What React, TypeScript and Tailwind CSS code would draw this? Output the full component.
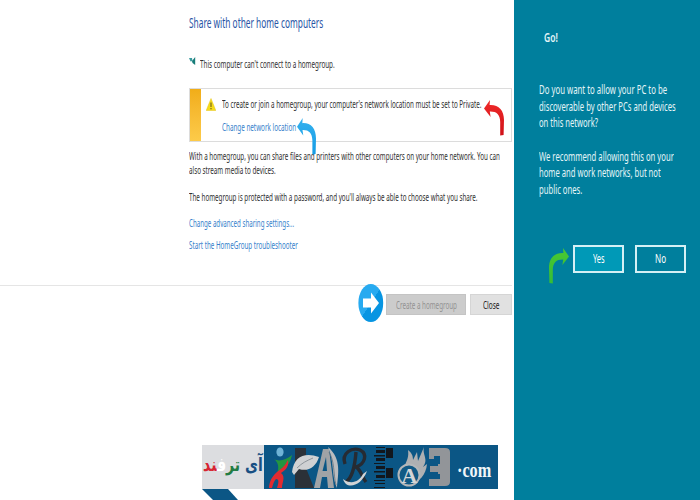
import { useLayoutEffect, useRef, useState } from "react";
import type { ReactNode } from "react";

type FitProps = { children: ReactNode; width: number; className?: string };

/** A single line of text condensed horizontally to the given width. */
function Fit({ children, width, className = "" }: FitProps) {
  const ref = useRef<HTMLSpanElement>(null);
  const [scale, setScale] = useState(1);
  useLayoutEffect(() => {
    if (ref.current) setScale(width / ref.current.offsetWidth);
  }, [width]);
  return (
    <div className={className} style={{ width }}>
      <span
        ref={ref}
        className="inline-block origin-left whitespace-nowrap align-top"
        style={{ transform: `scaleX(${scale})` }}
      >
        {children}
      </span>
    </div>
  );
}

function CurvedArrow({ id, from, to }: { id: string; from: string; to: string }) {
  return (
    <svg viewBox="0 0 20 36" className="h-full w-full" preserveAspectRatio="none">
      <defs>
        <linearGradient id={id} x1="0" y1="0" x2="0" y2="1">
          <stop offset="0" stopColor={from} />
          <stop offset="1" stopColor={to} />
        </linearGradient>
      </defs>
      <path
        d="M0 8.5 L6 0 L5.6 5 C14.5 4.5 20 10 20 20 L19.6 35 L16.2 35.5 L16.2 22 C16 14.5 12.5 11.4 5.8 11.6 L6.6 17 Z"
        fill={`url(#${id})`}
      />
    </svg>
  );
}

function BannerArt() {
  return (
    <svg viewBox="264 440 198 60" className="h-[60px] w-[198px]">
      <g>
        <ellipse cx="280" cy="452" rx="3.6" ry="4.6" fill="#6fb3d6" />
        <path d="M274 459 C279 462 286 460 292 455 C290 464 285 470 277 474 C279 468 279 463 274 459Z" fill="#24963f" />
        <path d="M288 460 C289 466 286 470 281 473 C286 477 282 482 282 488 H277 C279 482 279 479 276 479 C274 481 273 484 272 488 H269 C270 474 280 471 285 465Z" fill="#e12b30" />
      </g>
      <path d="M295 448 H306 V468 L314 488 H295Z" fill="#2b3138" />
      <path d="M292 472 C294 456 305 452 319 457 C316 467 308 472 299 469 L294 475Z" fill="#cfd1d3" />
      <path d="M297 468 C302 463 306 461 313 458" stroke="#8f969c" fill="none" />
      <path d="M323 449 H329 L334 488 H328 L327 477 H322 L320 488 H314Z M326 457 L322.5 471 H327Z" fill="#a0a3a6" fillRule="evenodd" />
      <path d="M328 447 C342 459 338 474 337 488 C331 475 335 464 328 447Z" fill="#babcbf" />
      <path d="M329 452 C335 462 333 473 336 485" stroke="#65717b" strokeWidth=".8" fill="none" />
      <path d="M345 464 C341 453 352 447 360 450 C368 454 365 464 356 467 C361 470 362 477 366 482 M356 452 C355 465 352 478 346 482" stroke="#262b33" strokeWidth="3.4" fill="none" />
      <path d="M343 479 C346 490 361 487 367 471 L363 474 C359 482 351 485 343 479Z" fill="#d1d4d6" />
      <g fill="#12171d">
        <path d="M376 447h9v1h-9z M376 450h9v3h-9z M374 455h11v1.5h-11z M376 458h9v3h-9z M374 463h11v1h-11z M376 466h9v3h-9z M374 471h11v1.5h-11z M376 475h9v3h-9z M374 480h11v1h-11z M375 483h10v1h-10z M374 487h11v1h-11z" />
        <path d="M386 448h7v10h-7z M386 468h7v10h-7z" />
      </g>
      <path d="M405 465 C407 460 409 457 408 450 C412 453 413 456 413 460 L417 452 L418 461 L424 447 C422 455 429 459 423 467 L427 464 C426 475 419 482 411 484Z" fill="#aeb0b2" />
      <circle cx="409" cy="475" r="10.5" fill="#105985" stroke="#b4b7b9" strokeWidth="2" />
      <text x="401.5" y="483" fontFamily="Liberation Serif, serif" fontSize="22" fontWeight="bold" fill="#d4d6d8">A</text>
      <path d="M429 448 H445 Q450 448 450 452 V482 Q450 486 445 486 H429 V479 H440 V474 H438 V472 H430 V466 H438 V464 H440 V456 H434 V459 H429Z" fill="#929599" />
    </svg>
  );
}

const body = "h-[14px] text-[11px] leading-[14px]";
const side = "h-[16.7px] text-[12.5px] leading-[16.7px]";

export default function App() {
  return (
    <div className="relative flex h-[500px] w-[700px] overflow-hidden bg-white font-['Noto_Sans',sans-serif] text-[#303030]">
      <main className="flex w-[514px] flex-col">
        <section className="flex h-[285px] flex-col pl-[189px]">
          <Fit width={134} className="mt-[13px] h-5 text-[14px] leading-5 text-[#2854a5]">Share with other home computers</Fit>
          <div className="mt-[24px] flex">
            <svg viewBox="0 0 7 9" className="h-[9px] w-[7px]">
              <path d="M0 1 L3 1 L3.5 4 L1.5 4.5Z" fill="#3b9ca0" />
              <path d="M3 4 L6.2 0 V8 L3.5 6Z" fill="#167c78" />
            </svg>
            <Fit width={134.5} className={`ml-[3.5px] ${body}`}>This computer can't connect to a homegroup.</Fit>
          </div>
          <div className="mt-[17px] flex h-[54px] w-[323px] border border-[#dcdcdc]">
            <div className="w-[11px] bg-linear-to-b from-[#f1ad17] to-[#fdcb49]" />
            <svg viewBox="0 0 10 13" className="mt-[9px] ml-[5px] h-[13px] w-[10px]">
              <path d="M5 .5 L9.8 12.5 H.2Z" fill="#f6dc18" stroke="#e6c51c" strokeWidth=".5" />
              <path d="M5 4.5V9M5 10V11.3" stroke="#625319" strokeWidth="1" />
            </svg>
            <div className="ml-[6px]">
              <Fit width={259.5} className={`mt-[8px] ${body}`}>To create or join a homegroup, your computer's network location must be set to Private.</Fit>
              <Fit width={74} className={`mt-[9px] text-[#367fcb] ${body}`}>Change network location</Fit>
            </div>
          </div>
          <Fit width={311} className={`mt-[7px] ${body}`}>With a homegroup, you can share files and printers with other computers on your home network. You can</Fit>
          <Fit width={86.5} className={body}>also stream media to devices.</Fit>
          <Fit width={288.5} className={`mt-[13px] ${body}`}>The homegroup is protected with a password, and you'll always be able to choose what you share.</Fit>
          <Fit width={105} className={`mt-[12px] text-[#367fcb] ${body}`}>Change advanced sharing settings...</Fit>
          <Fit width={109} className={`mt-2 text-[#367fcb] ${body}`}>Start the HomeGroup troubleshooter</Fit>
        </section>
        <section className="flex h-[160px] w-[512px] items-start border-t border-[#e5e5e5]">
          <svg viewBox="0 0 26 40" className="-mt-[3px] ml-[358px] h-10 w-[26px] shrink-0">
            <defs>
              <linearGradient id="round" x1="0" y1="0" x2="1" y2="1">
                <stop offset=".5" stopColor="#27aaf0" />
                <stop offset=".5" stopColor="#0795e2" />
              </linearGradient>
            </defs>
            <ellipse cx="12.8" cy="20" rx="12.4" ry="19" fill="url(#round)" />
            <path d="M5 15.5 H13 V9.5 L21 20 L13 30.5 V24.5 H5Z" fill="#fff" />
          </svg>
          <div className="mt-2 ml-[2px] flex h-[21px] w-[80px] shrink-0 justify-center border border-[#c4c4c4] bg-[#cccccc] pt-[3px] text-[#929292]">
            <Fit width={61} className={body}>Create a homegroup</Fit>
          </div>
          <div className="mt-2 ml-1 flex h-[21px] w-[42px] shrink-0 justify-center border border-[#d5d5d5] bg-[#e1e1e1] pt-[3px] text-[#202020]">
            <Fit width={16.5} className={body}>Close</Fit>
          </div>
        </section>
        <footer className="ml-[202px] h-[55px]">
          <div className="flex h-[44px] w-[296px] bg-[#0b5685]">
            <div dir="ltr" className="flex h-full w-[62px] shrink-0 justify-center bg-[#dcdde0] pt-[7px]">
              <Fit width={60} className="h-6 font-['DejaVu_Sans',sans-serif] text-[19px] leading-6 font-bold">
                <span dir="rtl">
                  <span className="text-[#184f83]">آی</span> <span className="text-[#247c43]">تر</span><span className="text-[#ffffff]">ف</span><span className="text-[#d72532]">ند</span>
                </span>
              </Fit>
            </div>
            <div className="-mt-[5px] h-[60px] w-[198px] shrink-0"><BannerArt /></div>
            <Fit width={34} className="-ml-[5px] mt-[11px] h-7 font-['Liberation_Serif',serif] text-[21px] leading-7 font-bold text-[#f0f5f8]">·com</Fit>
          </div>
          <svg viewBox="0 0 38 11" className="h-[11px] w-[38px]"><path d="M0 0H26L36 11H11Z" fill="#0b5685" /></svg>
        </footer>
      </main>
      <aside className="w-[186px] bg-[#007f9d] text-[#e5f5f8]">
        <Fit width={13.5} className="mt-[30px] ml-[30px] h-4 text-[12px] leading-4 font-semibold">Go!</Fit>
        <div className="mt-[36px] ml-[25px]">
          <Fit width={128} className={side}>Do you want to allow your PC to be</Fit>
          <Fit width={137} className={side}>discoverable by other PCs and devices</Fit>
          <Fit width={59} className={side}>on this network?</Fit>
          <Fit width={135} className={`mt-[16.7px] ${side}`}>We recommend allowing this on your</Fit>
          <Fit width={122} className={side}>home and work networks, but not</Fit>
          <Fit width={43} className={side}>public ones.</Fit>
        </div>
        <div className="mt-[46.3px] ml-[59px] flex gap-[11px]">
          <div className="flex h-[28px] w-[51px] justify-center border-2 border-[#d5f0f5] bg-[#0099b7] pt-[4px] text-white">
            <Fit width={12} className={side}>Yes</Fit>
          </div>
          <div className="flex h-[28px] w-[51px] justify-center border-2 border-[#d5f0f5] pt-[4px] text-white">
            <Fit width={11} className={side}>No</Fit>
          </div>
        </div>
      </aside>
      <div className="absolute top-[100px] left-[484px] h-[36px] w-[20px]"><CurvedArrow id="red" from="#f02a2a" to="#cf1118" /></div>
      <div className="absolute top-[118px] left-[297px] h-[37px] w-[19px]"><CurvedArrow id="blue" from="#35b1ee" to="#159ce5" /></div>
      <div className="absolute top-[248px] left-[549px] h-[36px] w-[20px] -scale-x-100"><CurvedArrow id="green" from="#4ac832" to="#35bd36" /></div>
    </div>
  );
}
